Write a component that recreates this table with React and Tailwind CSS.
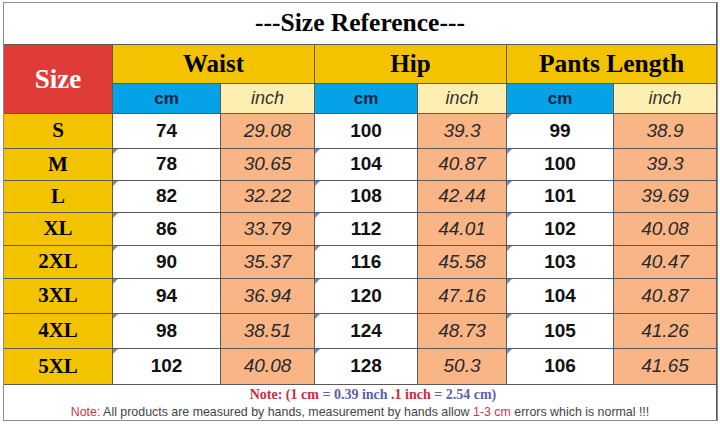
import React from "react";

const rows = [
  ["S", "74", "29.08", "100", "39.3", "99", "38.9"],
  ["M", "78", "30.65", "104", "40.87", "100", "39.3"],
  ["L", "82", "32.22", "108", "42.44", "101", "39.69"],
  ["XL", "86", "33.79", "112", "44.01", "102", "40.08"],
  ["2XL", "90", "35.37", "116", "45.58", "103", "40.47"],
  ["3XL", "94", "36.94", "120", "47.16", "104", "40.87"],
  ["4XL", "98", "38.51", "124", "48.73", "105", "41.26"],
  ["5XL", "102", "40.08", "128", "50.3", "106", "41.65"],
];

function Tick() {
  return (
    <span className="absolute left-0 top-0 w-0 h-0 border-t-[5px] border-r-[5px] border-t-[#8a8a8a] border-r-transparent" />
  );
}

export default function App() {
  return (
    <div className="w-[720px] h-[424px] bg-white pt-[2px] pl-[3px]">
      <div className="w-[715px] border border-[#8c8c8c]">
        <div className="grid gap-px bg-[#5a5a5a] grid-cols-[108px_107px_93px_102px_88px_106px_102px] grid-rows-[41px_38px_29px_34px_31px_31px_32px_32px_34px_34px_35px_35px]">
          <div className="col-span-7 bg-white flex items-center justify-center text-[25.5px] font-bold text-black font-['Liberation_Serif',serif]">
            ---Size Reference---
          </div>

          <div className="row-span-2 bg-[#e03c37] flex items-center justify-center text-[27px] font-bold text-white font-['Liberation_Serif',serif]">
            Size
          </div>
          <div className="col-span-2 bg-[#f4c300] flex items-center justify-center text-[25px] font-bold text-black font-['Liberation_Serif',serif]">
            Waist
          </div>
          <div className="col-span-2 bg-[#f4c300] flex items-center justify-center text-[25px] font-bold text-black font-['Liberation_Serif',serif]">
            Hip
          </div>
          <div className="col-span-2 bg-[#f4c300] flex items-center justify-center text-[25.5px] font-bold text-black font-['Liberation_Serif',serif]">
            Pants Length
          </div>

          {[0, 1, 2].map((i) => (
            <React.Fragment key={i}>
              <div className="bg-[#05a2e8] flex items-center justify-center text-[17px] font-bold text-[#0c2340] font-['Liberation_Sans',sans-serif]">
                cm
              </div>
              <div className="bg-[#fdeeb1] flex items-center justify-center text-[18px] italic text-[#333] font-['Liberation_Sans',sans-serif]">
                inch
              </div>
            </React.Fragment>
          ))}

          {rows.map((r, ri) => (
            <React.Fragment key={r[0]}>
              <div className="bg-[#f4c300] flex items-center justify-center text-[21px] font-bold text-black font-['Liberation_Serif',serif]">
                {r[0]}
              </div>
              {[1, 3, 5].map((c) => (
                <React.Fragment key={c}>
                  <div className="relative bg-white flex items-center justify-center text-[19px] font-bold text-[#111] font-['Liberation_Sans',sans-serif]">
                    {(ri > 0 || c === 5) && <Tick />}
                    {r[c]}
                  </div>
                  <div className="bg-[#fab587] flex items-center justify-center text-[19px] italic text-[#2a2a2a] font-['Liberation_Sans',sans-serif]">
                    {r[c + 1]}
                  </div>
                </React.Fragment>
              ))}
            </React.Fragment>
          ))}

          <div className="col-span-7 bg-white flex flex-col items-center justify-center pt-[1px] leading-none">
            <div className="text-[14px] font-bold ml-[26px] font-['Liberation_Serif',serif]">
              <span className="text-[#cf2a3e]">Note: (1 cm </span>
              <span className="text-[#5b5ea8]">= 0.39 inch </span>
              <span className="text-[#cf2a3e]">.1 inch </span>
              <span className="text-[#5b5ea8]">= 2.54 cm)</span>
            </div>
            <div className="text-[12.4px] mt-[4px] text-[#444] font-['Liberation_Sans',sans-serif]">
              <span className="text-[#d6333f]">Note:</span> All products are measured by hands, measurement by hands allow{" "}
              <span className="text-[#d6333f]">1-3 cm</span> errors which is normal !!!
            </div>
          </div>
        </div>
      </div>
    </div>
  );
}
